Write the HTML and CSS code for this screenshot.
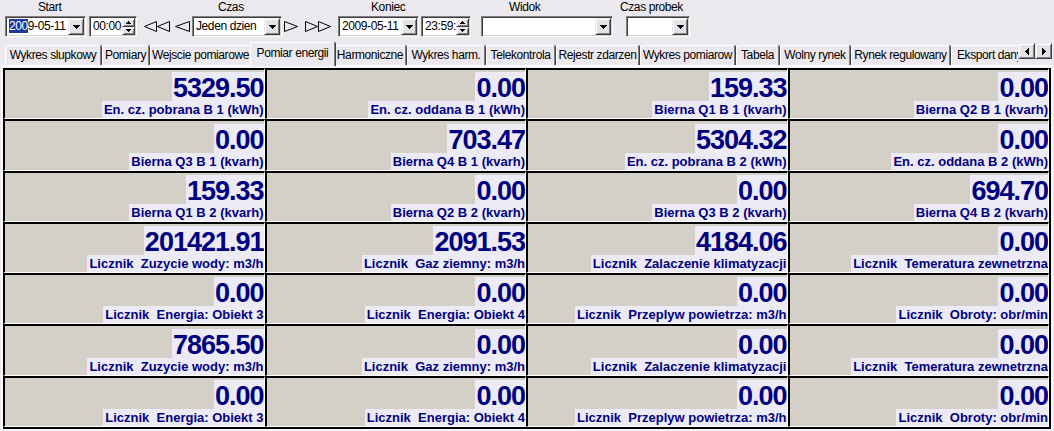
FILE: index.html
```html
<!DOCTYPE html>
<html lang="pl">
<head>
<meta charset="utf-8">
<title>Pomiar energii</title>
<link rel="stylesheet" href="styles.css">
</head>
<body>
<div class="toolbar">
  <div class="grp g-start">
    <div class="lbl l-start">Start</div>
    <div class="field w-date">
      <span class="ftxt"><span class="sel">200</span>9-05-11</span>
      <span class="btn dd"><svg width="7" height="4" viewBox="0 0 7 4" shape-rendering="crispEdges"><path d="M0 0h7v1H0zM1 1h5v1H1zM2 2h3v1H2zM3 3h1v1H3z"/></svg></span>
    </div>
  </div>
  <div class="field w-time1">
    <span class="ftxt">00:00</span>
    <span class="spin">
      <span class="btn sb"><svg width="5" height="3" viewBox="0 0 5 3" shape-rendering="crispEdges"><path d="M2 0h1v1H2zM1 1h3v1H1zM0 2h5v1H0z"/></svg></span>
      <span class="btn sb"><svg width="5" height="3" viewBox="0 0 5 3" shape-rendering="crispEdges"><path d="M0 0h5v1H0zM1 1h3v1H1zM2 2h1v1H2z"/></svg></span>
    </span>
  </div>
  <div class="nav n-dl"><svg width="27" height="11" viewBox="0 0 27 11"><polygon points="12.5,0.5 0.5,5.5 12.5,10.5"/><polygon points="25.5,0.5 13.5,5.5 25.5,10.5"/></svg></div>
  <div class="nav n-l"><svg width="15" height="11" viewBox="0 0 15 11"><polygon points="14.5,0.5 0.5,5.5 14.5,10.5"/></svg></div>
  <div class="grp g-czas">
    <div class="lbl l-czas">Czas</div>
    <div class="field w-combo">
      <span class="ftxt">Jeden dzien</span>
      <span class="btn dd"><svg width="7" height="4" viewBox="0 0 7 4" shape-rendering="crispEdges"><path d="M0 0h7v1H0zM1 1h5v1H1zM2 2h3v1H2zM3 3h1v1H3z"/></svg></span>
    </div>
  </div>
  <div class="nav n-r"><svg width="14" height="11" viewBox="0 0 14 11"><polygon points="0.5,0.5 13.5,5.5 0.5,10.5"/></svg></div>
  <div class="nav n-dr"><svg width="26" height="11" viewBox="0 0 26 11"><polygon points="0.5,0.5 12.5,5.5 0.5,10.5"/><polygon points="13.5,0.5 25.5,5.5 13.5,10.5"/></svg></div>
  <div class="grp g-koniec">
    <div class="lbl l-koniec">Koniec</div>
    <div class="field w-date">
      <span class="ftxt">2009-05-11</span>
      <span class="btn dd"><svg width="7" height="4" viewBox="0 0 7 4" shape-rendering="crispEdges"><path d="M0 0h7v1H0zM1 1h5v1H1zM2 2h3v1H2zM3 3h1v1H3z"/></svg></span>
    </div>
  </div>
  <div class="field w-time2">
    <span class="ftxt">23:59:59</span>
    <span class="spin">
      <span class="btn sb"><svg width="5" height="3" viewBox="0 0 5 3" shape-rendering="crispEdges"><path d="M2 0h1v1H2zM1 1h3v1H1zM0 2h5v1H0z"/></svg></span>
      <span class="btn sb"><svg width="5" height="3" viewBox="0 0 5 3" shape-rendering="crispEdges"><path d="M0 0h5v1H0zM1 1h3v1H1zM2 2h1v1H2z"/></svg></span>
    </span>
  </div>
  <div class="grp g-widok">
    <div class="lbl l-widok">Widok</div>
    <div class="field w-widok">
      <span class="ftxt"></span>
      <span class="btn dd"><svg width="7" height="4" viewBox="0 0 7 4" shape-rendering="crispEdges"><path d="M0 0h7v1H0zM1 1h5v1H1zM2 2h3v1H2zM3 3h1v1H3z"/></svg></span>
    </div>
  </div>
  <div class="grp g-probek">
    <div class="lbl l-probek">Czas probek</div>
    <div class="field w-probek">
      <span class="ftxt"></span>
      <span class="btn dd"><svg width="7" height="4" viewBox="0 0 7 4" shape-rendering="crispEdges"><path d="M0 0h7v1H0zM1 1h5v1H1zM2 2h3v1H2zM3 3h1v1H3z"/></svg></span>
    </div>
  </div>
</div>

<div class="tabstrip">
  <div class="tablist">
    <div class="tab">Wykres slupkowy</div>
    <div class="tab">Pomiary</div>
    <div class="tab">Wejscie pomiarowe</div>
    <div class="tab active">Pomiar energii</div>
    <div class="tab">Harmoniczne</div>
    <div class="tab">Wykres harm.</div>
    <div class="tab">Telekontrola</div>
    <div class="tab">Rejestr zdarzen</div>
    <div class="tab">Wykres pomiarow</div>
    <div class="tab">Tabela</div>
    <div class="tab">Wolny rynek</div>
    <div class="tab">Rynek regulowany</div>
    <div class="tab">Eksport danych</div>
  </div>
  <div class="tscroll">
    <span class="btn tsb"><svg width="4" height="7" viewBox="0 0 4 7" shape-rendering="crispEdges"><path d="M3 0h1v7H3zM2 1h1v5H2zM1 2h1v3H1zM0 3h1v1H0z"/></svg></span>
    <span class="btn tsb"><svg width="4" height="7" viewBox="0 0 4 7" shape-rendering="crispEdges"><path d="M0 0h1v7H0zM1 1h1v5H1zM2 2h1v3H2zM3 3h1v1H3z"/></svg></span>
  </div>
</div>

<div class="page">
  <div class="grid">
    <div class="cell"><span class="val">5329.50</span><span class="cap">En. cz. pobrana B 1 (kWh)</span></div>
    <div class="cell"><span class="val">0.00</span><span class="cap">En. cz. oddana B 1 (kWh)</span></div>
    <div class="cell"><span class="val">159.33</span><span class="cap">Bierna Q1 B 1 (kvarh)</span></div>
    <div class="cell"><span class="val">0.00</span><span class="cap">Bierna Q2 B 1 (kvarh)</span></div>

    <div class="cell"><span class="val">0.00</span><span class="cap">Bierna Q3 B 1 (kvarh)</span></div>
    <div class="cell"><span class="val">703.47</span><span class="cap">Bierna Q4 B 1 (kvarh)</span></div>
    <div class="cell"><span class="val">5304.32</span><span class="cap">En. cz. pobrana B 2 (kWh)</span></div>
    <div class="cell"><span class="val">0.00</span><span class="cap">En. cz. oddana B 2 (kWh)</span></div>

    <div class="cell"><span class="val">159.33</span><span class="cap">Bierna Q1 B 2 (kvarh)</span></div>
    <div class="cell"><span class="val">0.00</span><span class="cap">Bierna Q2 B 2 (kvarh)</span></div>
    <div class="cell"><span class="val">0.00</span><span class="cap">Bierna Q3 B 2 (kvarh)</span></div>
    <div class="cell"><span class="val">694.70</span><span class="cap">Bierna Q4 B 2 (kvarh)</span></div>

    <div class="cell"><span class="val">201421.91</span><span class="cap">Licznik  Zuzycie wody: m3/h</span></div>
    <div class="cell"><span class="val">2091.53</span><span class="cap">Licznik  Gaz ziemny: m3/h</span></div>
    <div class="cell"><span class="val">4184.06</span><span class="cap">Licznik  Zalaczenie klimatyzacji</span></div>
    <div class="cell"><span class="val">0.00</span><span class="cap">Licznik  Temeratura zewnetrzna</span></div>

    <div class="cell"><span class="val">0.00</span><span class="cap">Licznik  Energia: Obiekt 3</span></div>
    <div class="cell"><span class="val">0.00</span><span class="cap">Licznik  Energia: Obiekt 4</span></div>
    <div class="cell"><span class="val">0.00</span><span class="cap">Licznik  Przeplyw powietrza: m3/h</span></div>
    <div class="cell"><span class="val">0.00</span><span class="cap">Licznik  Obroty: obr/min</span></div>

    <div class="cell"><span class="val">7865.50</span><span class="cap">Licznik  Zuzycie wody: m3/h</span></div>
    <div class="cell"><span class="val">0.00</span><span class="cap">Licznik  Gaz ziemny: m3/h</span></div>
    <div class="cell"><span class="val">0.00</span><span class="cap">Licznik  Zalaczenie klimatyzacji</span></div>
    <div class="cell"><span class="val">0.00</span><span class="cap">Licznik  Temeratura zewnetrzna</span></div>

    <div class="cell"><span class="val">0.00</span><span class="cap">Licznik  Energia: Obiekt 3</span></div>
    <div class="cell"><span class="val">0.00</span><span class="cap">Licznik  Energia: Obiekt 4</span></div>
    <div class="cell"><span class="val">0.00</span><span class="cap">Licznik  Przeplyw powietrza: m3/h</span></div>
    <div class="cell"><span class="val">0.00</span><span class="cap">Licznik  Obroty: obr/min</span></div>
  </div>
</div>
</body>
</html>
```

FILE: styles.css
```css
* { box-sizing: border-box; }

html, body {
  margin: 0;
  padding: 0;
}

body {
  width: 1054px;
  height: 431px;
  overflow: hidden;
  background: #ECE9EE;
  color: #000;
  font-family: "Liberation Sans", Arial, sans-serif;
  font-size: 12px;
  letter-spacing: -0.4px;
}

/* ---------- toolbar ---------- */
.toolbar {
  display: flex;
  align-items: flex-end;
  height: 40px;
  padding: 0 0 3px 5px;
}

.grp {
  display: flex;
  flex-direction: column;
}

.lbl {
  height: 16px;
  line-height: 15px;
  white-space: nowrap;
}

.l-start { padding-left: 33px; }
.l-czas { padding-left: 26px; }
.l-koniec { padding-left: 33px; }
.l-widok { padding-left: 28px; }
.l-probek { margin-left: -6px; }

.field {
  display: flex;
  height: 21px;
  padding: 1px;
  background: #fff;
  border: 1px solid;
  border-color: #808080 #fff #fff #808080;
  box-shadow: inset 1px 1px 0 #404040, inset -1px -1px 0 #D4D0C8;
}

.ftxt {
  flex: 1;
  min-width: 0;
  padding-left: 2px;
  line-height: 17px;
  white-space: nowrap;
  overflow: hidden;
}

.sel {
  background: #1E3A9E;
  color: #fff;
}

.w-date { width: 81px; }
.w-time1 { width: 48px; margin-left: 3px; }
.w-combo { width: 90px; }
.w-time2 { width: 50px; margin-left: 2px; }
.w-widok { width: 132px; }
.w-probek { width: 64px; }

.g-czas { margin-left: 2px; }
.g-koniec { margin-left: 7px; }
.g-widok { margin-left: 10px; }
.g-probek { margin-left: 13px; width: 64px; }

.btn {
  display: flex;
  align-items: center;
  justify-content: center;
  background: #E4E2E6;
  border: 1px solid;
  border-color: #ECE9EE #404040 #404040 #ECE9EE;
  box-shadow: inset 1px 1px 0 #fff, inset -1px -1px 0 #808080;
}

.btn svg { display: block; fill: #000; }

.dd {
  width: 16px;
  height: 17px;
  flex: none;
}

.spin {
  display: flex;
  flex-direction: column;
  width: 13px;
  height: 17px;
  flex: none;
}

.sb {
  flex: 1;
}

.nav {
  height: 21px;
  display: flex;
  align-items: center;
}

.nav svg {
  display: block;
  fill: none;
  stroke: #000;
  stroke-width: 1;
}

.n-dl { margin-left: 7px; width: 27px; }
.n-l { margin-left: 4px; width: 15px; }
.n-r { margin-left: 2px; width: 14px; }
.n-dr { margin-left: 7px; width: 26px; }

/* ---------- tabs ---------- */
.tabstrip {
  display: flex;
  align-items: flex-end;
  height: 26px;
  margin-bottom: -1px;
  position: relative;
  z-index: 2;
}

.tablist {
  flex: 1;
  min-width: 0;
  display: flex;
  align-items: flex-end;
  height: 27px;
  padding-left: 5px;
  overflow: hidden;
}

.tab {
  flex: none;
  height: 20px;
  margin-bottom: 1px;
  margin-right: 1px;
  line-height: 19px;
  text-align: center;
  white-space: nowrap;
  border-top: 1px solid #fff;
  border-left: 1px solid #fff;
  border-right: 1px solid #808080;
  border-radius: 2px 2px 0 0;
  box-shadow: 1px 0 0 #404040;
}

.tab:nth-child(1) { width: 96px; }
.tab:nth-child(2) { width: 47px; }
.tab:nth-child(3) { width: 101px; }
.tab:nth-child(4) { width: 85px; }
.tab:nth-child(5) { width: 72px; }
.tab:nth-child(6) { width: 78px; }
.tab:nth-child(7) { width: 69px; }
.tab:nth-child(8) { width: 83px; }
.tab:nth-child(9) { width: 95px; }
.tab:nth-child(10) { width: 43px; }
.tab:nth-child(11) { width: 70px; }
.tab:nth-child(12) { width: 99px; }
.tab:nth-child(13) { width: 110px; text-align: left; padding-left: 5px; }

.tab.active {
  position: relative;
  z-index: 1;
  height: 24px;
  margin: 0 -1px 0 -2px;
  line-height: 20px;
  background: #ECE9EE;
}

.tscroll {
  display: flex;
  flex: none;
  margin: 0 2px 7px 0;
}

.tsb {
  width: 17px;
  height: 16px;
}

/* ---------- page ---------- */
.page {
  margin: 0 1px;
  height: 366px;
  border-top: 1px solid #fff;
  border-left: 1px solid #fff;
  padding: 2px 0 0 1px;
  background: #F6F5F9;
}

.grid {
  display: grid;
  grid-template-columns: repeat(4, 1fr);
  grid-template-rows: repeat(7, 1fr);
  width: 1048px;
  height: 361px;
  border-right: 2px solid #000;
  border-bottom: 2px solid #000;
}

.cell {
  min-width: 0;
  min-height: 0;
  overflow: hidden;
  display: flex;
  flex-direction: column;
  align-items: flex-end;
  justify-content: flex-end;
  background: #D4D0C8;
  border-top: 2px solid #000;
  border-left: 2px solid #000;
  border-right: 1px solid #fff;
  border-bottom: 1px solid #fff;
  color: #000080;
}

.val {
  font-weight: bold;
  font-size: 27px;
  line-height: 25px;
  letter-spacing: -1px;
  padding: 4px 0 0 1px;
  background: #ECEBF5;
  white-space: nowrap;
}

.cap {
  font-weight: bold;
  font-size: 13px;
  line-height: 17px;
  letter-spacing: 0;
  padding-left: 2px;
  background: #ECEBF5;
  white-space: pre;
}
```
